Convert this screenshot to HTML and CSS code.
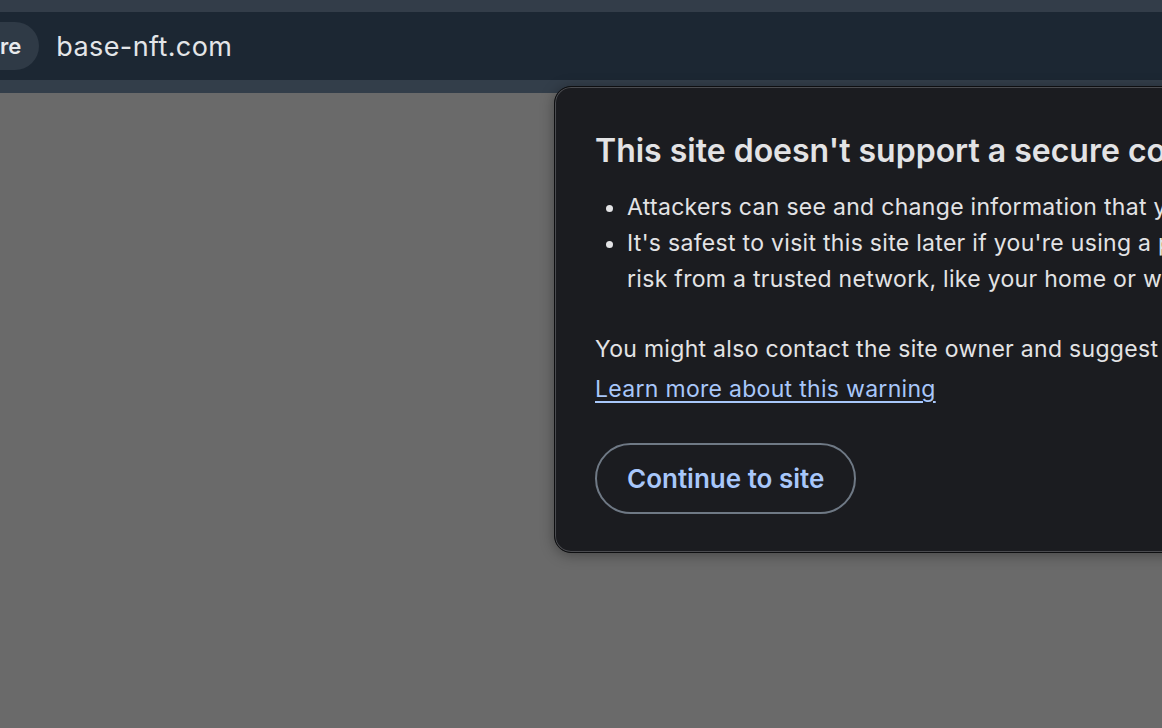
FILE: index.html
```html
<!DOCTYPE html>
<html>
<head>
<meta charset="utf-8">
<link rel="stylesheet" href="styles.css">
</head>
<body>
<div class="toolbar">
  <div class="strip-top"></div>
  <div class="bar">
    <span class="chip">re</span>
    <span class="url">base-nft.com</span>
  </div>
  <div class="strip-bottom"></div>
</div>
<div class="page"></div>
<div class="popup">
  <h1 class="title">This site doesn't support a secure connection</h1>
  <ul class="list">
    <li>Attackers can see and change information that you send or get from the site.</li>
    <li>It's safest to visit this site later if you're using a public network. There is less<br>risk from a trusted network, like your home or work Wi-Fi.</li>
  </ul>
  <p class="para">You might also contact the site owner and suggest they upgrade to HTTPS.</p>
  <a class="link" href="#">Learn more about this warning</a>
  <div class="actions">
    <button class="btn">Continue to site</button>
  </div>
</div>
</body>
</html>
```

FILE: styles.css
```css
html, body {
  margin: 0;
  padding: 0;
  width: 1162px;
  height: 728px;
  overflow: hidden;
  background: #6a6a6a;
  font-family: Inter, "Noto Sans", sans-serif;
}
.toolbar {
  display: flex;
  flex-direction: column;
}
.strip-top {
  height: 12px;
  background: #333d49;
}
.bar {
  height: 68px;
  background: #1c2733;
  display: flex;
  align-items: center;
}
.chip {
  height: 48px;
  display: flex;
  align-items: center;
  padding-right: 18px;
  background: #2f3a46;
  border-radius: 0 24px 24px 0;
  color: #e8eaed;
  font-size: 22px;
  font-weight: 600;
}
.url {
  margin-left: 17px;
  color: #e3e5e8;
  font-size: 27px;
  letter-spacing: 0.4px;
}
.strip-bottom {
  height: 13px;
  background: #333e4a;
}
.popup {
  position: absolute;
  left: 554px;
  top: 86px;
  width: 1000px;
  height: 467px;
  box-sizing: border-box;
  padding: 40px 40px 0 40px;
  background: #1b1c20;
  border: 1px solid #0e0f11;
  border-radius: 17px;
  box-shadow: inset 0 0 0 1px #4b4c50, 0 2px 14px rgba(0,0,0,0.35);
  color: #e3e3e5;
}
.title {
  margin: 0;
  font-size: 32px;
  font-weight: 600;
  line-height: 48px;
  white-space: nowrap;
}
.list {
  margin: 14px 0 0 0;
  padding-left: 32px;
  font-size: 23px;
  letter-spacing: 0.3px;
  line-height: 36px;
}
.list li {
  white-space: nowrap;
}
.para {
  margin: 34px 0 0 0;
  font-size: 23px;
  letter-spacing: 0.3px;
  line-height: 36px;
  white-space: nowrap;
}
.link {
  display: inline-block;
  margin-top: 4px;
  color: #a8c7fa;
  font-size: 23px;
  letter-spacing: 0.3px;
  line-height: 36px;
  text-decoration: underline;
  text-underline-offset: 4px;
  text-decoration-thickness: 1.5px;
}
.actions {
  margin-top: 36px;
  display: flex;
}
.btn {
  height: 71px;
  padding: 0 30px;
  border: 2px solid #6f7985;
  border-radius: 36px;
  background: transparent;
  color: #a8c7fa;
  font-family: Inter, "Noto Sans", sans-serif;
  font-size: 26px;
  font-weight: 600;
}
```
